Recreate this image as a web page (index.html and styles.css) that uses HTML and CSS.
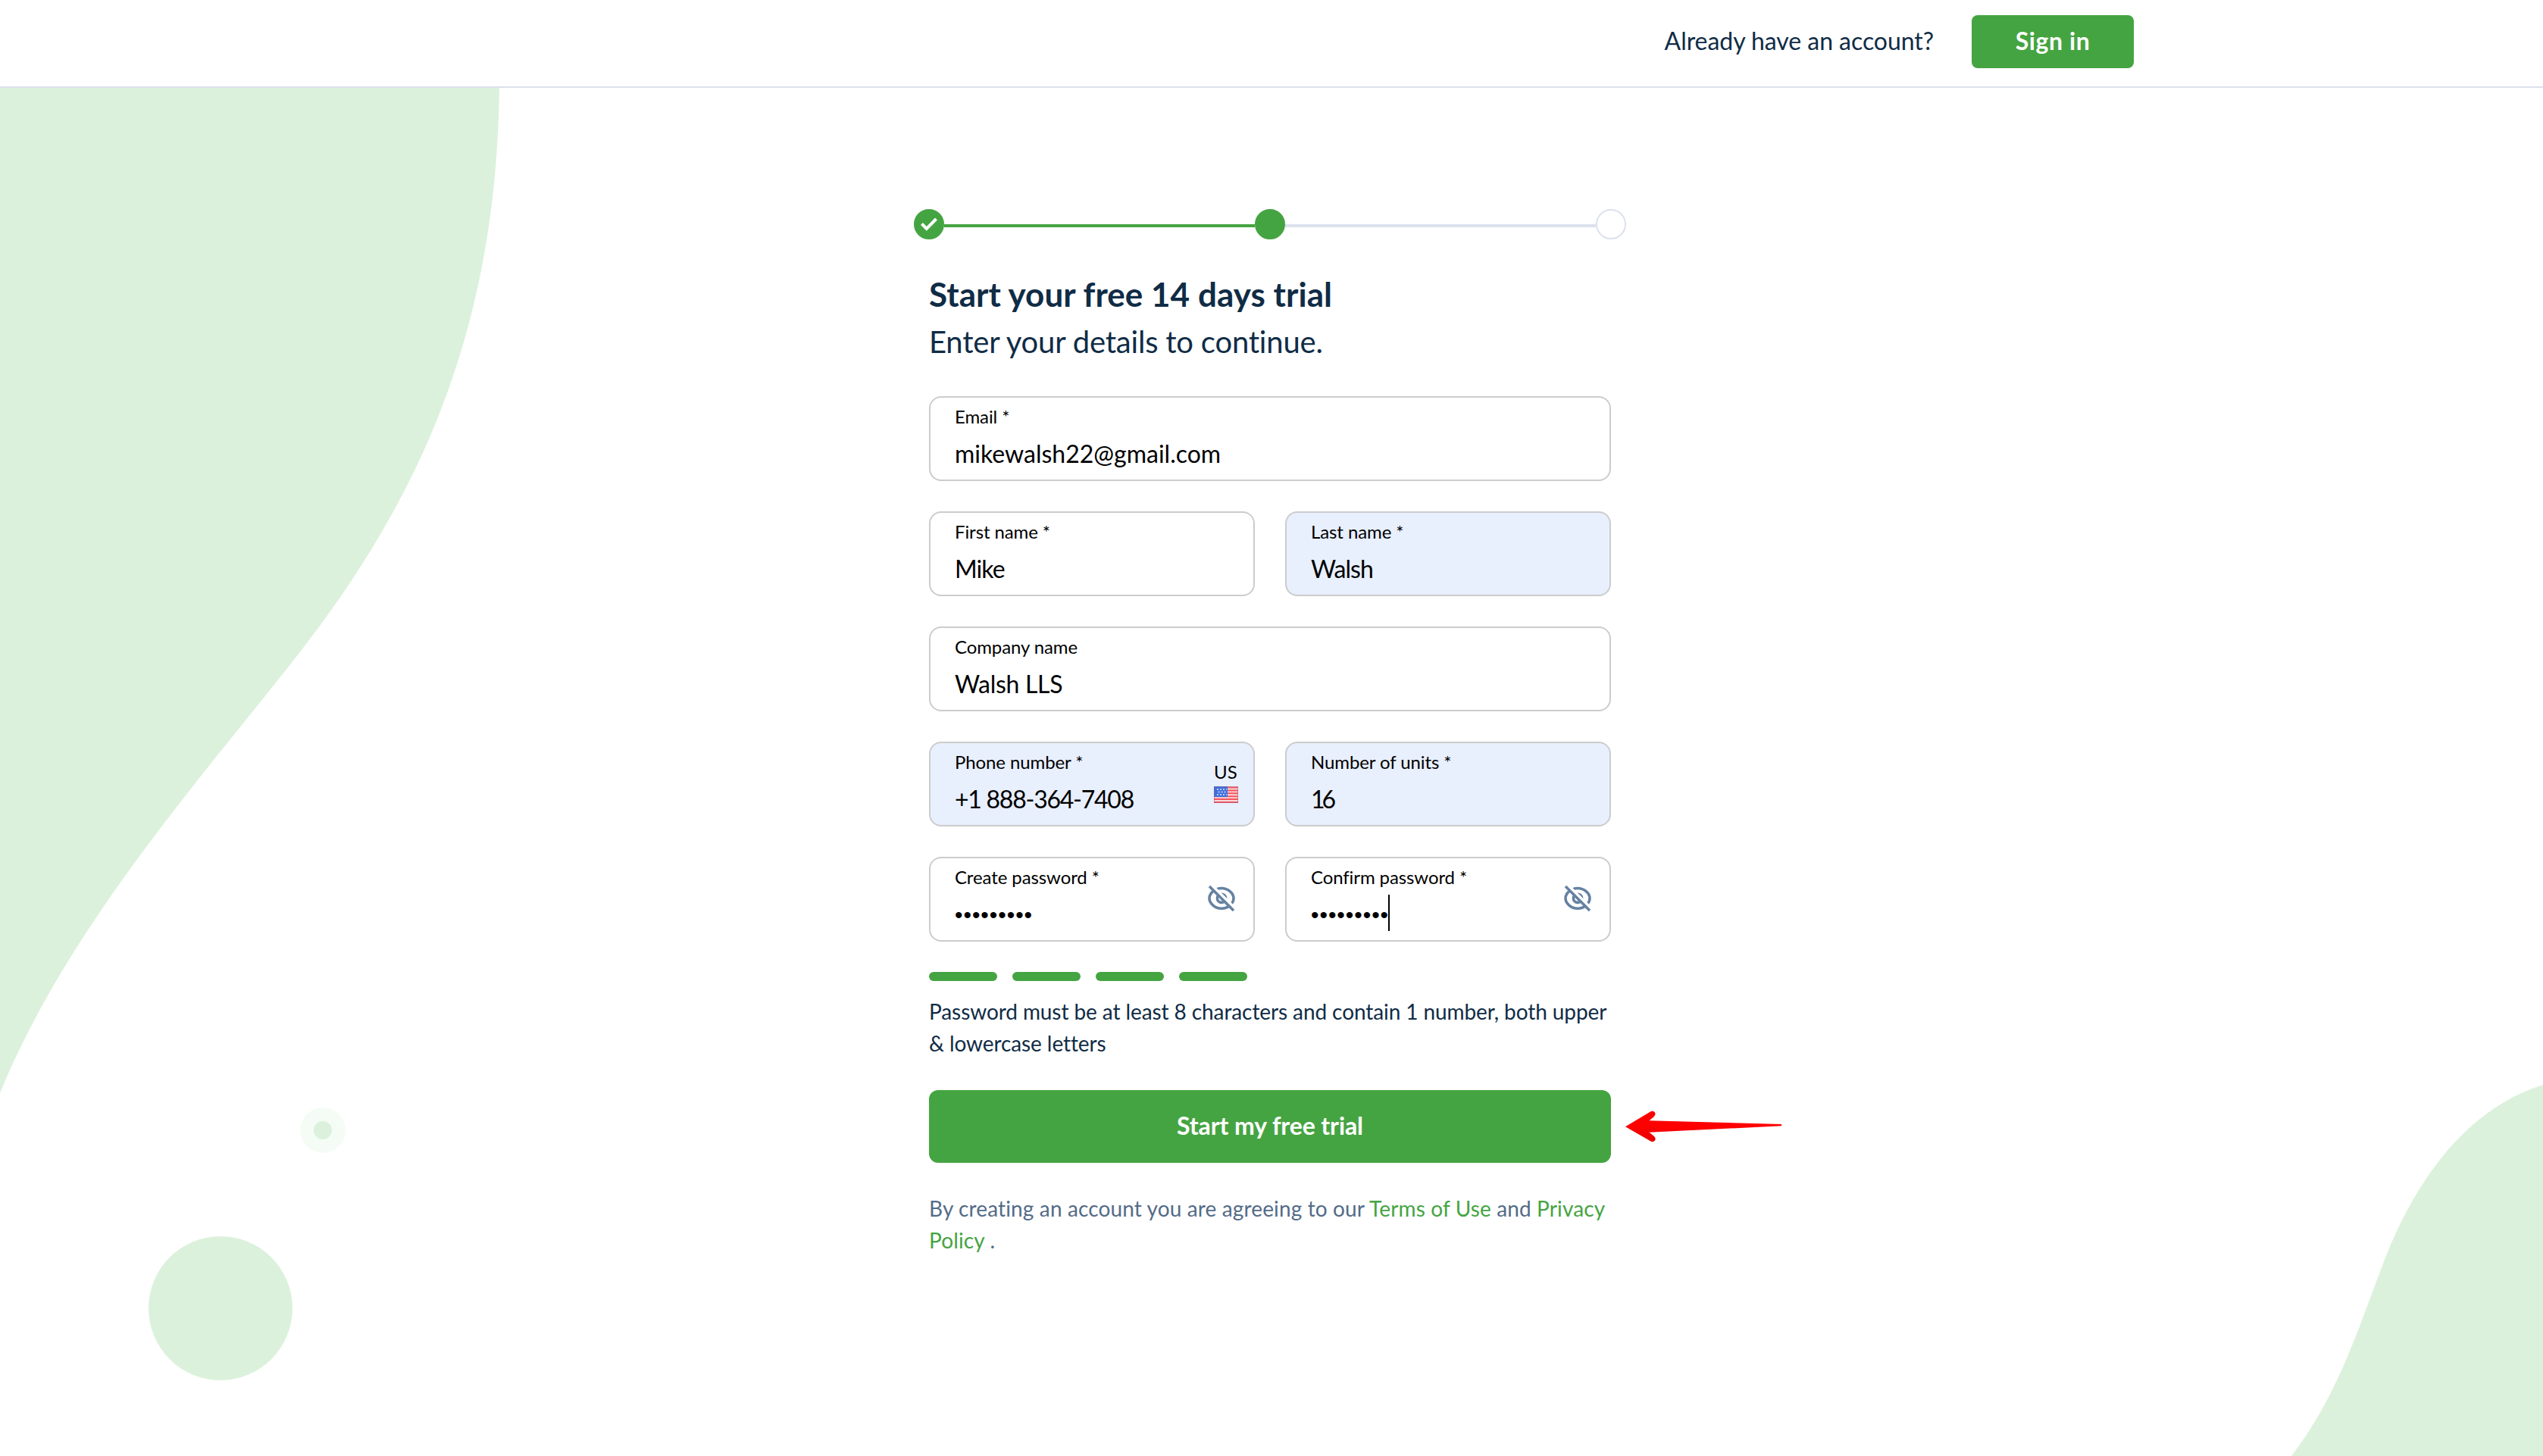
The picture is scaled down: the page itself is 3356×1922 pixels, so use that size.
FILE: index.html
```html
<!DOCTYPE html>
<html lang="en">
<head>
    <meta charset="UTF-8">
    <meta name="viewport" content="width=device-width, initial-scale=1.0">
    <title>Start your free trial</title>
    <link rel="stylesheet" href="styles.css">
</head>
<body>

    <!-- Background shapes -->
    <svg class="shapes" viewBox="0 0 3356 1922" aria-hidden="true">
        <path d="M0 116H659C655 420 565 640 404 850C290 1000 95 1210 0 1443Z"/>
        <path d="M3356 1432C3260 1462 3190 1550 3145 1668C3110 1760 3085 1842 3024 1922H3356Z"/>
        <circle cx="291" cy="1727" r="95"/>
        <circle class="halo" cx="426" cy="1492" r="30"/>
        <circle cx="426" cy="1492" r="12"/>
    </svg>

    <header class="header">
        <span class="header-text">Already have an account?</span>
        <a class="sign-in" href="#">Sign in</a>
    </header>

    <main class="signup">
        <div class="stepper">
            <span class="step done">
                <svg width="24" height="20" viewBox="0 0 24 20"><path d="M2.5 9.5L8.8 16L21.5 3" fill="none" stroke="#fff" stroke-width="4"/></svg>
            </span>
            <span class="step-line done"></span>
            <span class="step done"></span>
            <span class="step-line"></span>
            <span class="step"></span>
        </div>

        <h1>Start your free 14 days trial</h1>
        <p class="subtitle">Enter your details to continue.</p>

        <form class="form">
            <div class="field wide">
                <label>Email *</label>
                <div class="value">mikewalsh22@gmail.com</div>
            </div>
            <div class="field">
                <label>First name *</label>
                <div class="value name">Mike</div>
            </div>
            <div class="field filled">
                <label>Last name *</label>
                <div class="value name">Walsh</div>
            </div>
            <div class="field wide">
                <label>Company name</label>
                <div class="value company">Walsh LLS</div>
            </div>
            <div class="field filled">
                <label>Phone number *</label>
                <div class="value phone">+1 888-364-7408</div>
                <div class="country">
                    <span>US</span>
                    <svg width="32" height="22" viewBox="0 0 32 22">
                        <rect width="32" height="22" fill="#f6d9dc"/>
                        <path d="M0 1.5H32M0 5.4H32M0 9.3H32M0 13.2H32M0 17.1H32M0 21H32" stroke="#f4565c" stroke-width="2"/>
                        <rect width="18" height="14" fill="#3f6fdc"/>
                        <path d="M4 4H17M5.5 7.5H17M4 11H17" stroke="#b9cbf5" stroke-width="1.8" stroke-dasharray="2 2"/>
                        <rect x=".5" y=".5" width="31" height="21" fill="none" stroke="#9a5a78" stroke-opacity=".45"/>
                    </svg>
                </div>
            </div>
            <div class="field filled">
                <label>Number of units *</label>
                <div class="value units">16</div>
            </div>
            <div class="field">
                <label>Create password *</label>
                <div class="value dots">•••••••••</div>
                <svg class="eye" width="36" height="36" viewBox="0 0 36 36">
                    <path d="M18 4.5C26.500 4.500 34 11 34 17.800S26.500 31.200 18 31.200S2 24.600 2 17.800S9.500 4.500 18 4.500Z"/>
                    <circle cx="18" cy="17.800" r="5.600"/>
                    <path class="gap" d="M5 .5L36.500 32"/>
                    <path d="M2 2L34 34"/>
                </svg>
            </div>
            <div class="field">
                <label>Confirm password *</label>
                <div class="value dots">•••••••••<span class="caret"></span></div>
                <svg class="eye" width="36" height="36" viewBox="0 0 36 36">
                    <path d="M18 4.5C26.500 4.500 34 11 34 17.800S26.500 31.200 18 31.200S2 24.600 2 17.800S9.500 4.500 18 4.500Z"/>
                    <circle cx="18" cy="17.800" r="5.600"/>
                    <path class="gap" d="M5 .5L36.500 32"/>
                    <path d="M2 2L34 34"/>
                </svg>
            </div>
        </form>

        <div class="strength">
            <span></span><span></span><span></span><span></span>
        </div>
        <p class="hint">Password must be at least 8 characters and contain 1 number, both upper<br>&amp; lowercase letters</p>

        <div class="submit">
            <button class="submit-button" type="button">Start my free trial</button>
            <svg class="arrow" width="210" height="44" viewBox="0 0 210 44">
                <defs>
                    <linearGradient id="red" x1="0" y1="0" x2="0" y2="1">
                        <stop offset=".5" stop-color="#ff0000"/>
                        <stop offset="1" stop-color="#e60000"/>
                    </linearGradient>
                </defs>
                <path fill="url(#red)" d="M0 22.300L33.500 2.300C38 .2 42 5 37.500 9.200L31.500 14.300L206 19V21.200L31.500 29.800L38 35C42 39 38 44 33.500 41.500Z"/>
            </svg>
        </div>

        <p class="terms">By creating an account you are agreeing to our <a href="#">Terms of Use</a> and <a href="#">Privacy<br>Policy</a> .</p>
    </main>

</body>
</html>
```
FILE: styles.css
```css
* {
    box-sizing: border-box;
}
body {
    margin: 0;
    height: 1922px;
    overflow: hidden;
    background: #fff;
    color: #102c46;
    font-family: Lato, "Open Sans", sans-serif;
}
a {
    color: #45a442;
    text-decoration: none;
}
/* Background */
.shapes {
    position: absolute;
    top: 0;
    left: 0;
    width: 3356px;
    height: 1922px;
    z-index: -1;
    fill: #dbf1db;
}
.shapes .halo {
    fill: #f5fcf5;
}
/* Header */
.header {
    display: flex;
    justify-content: flex-end;
    align-items: flex-start;
    gap: 50px;
    height: 116px;
    padding: 20px 540px 0 0;
    border-bottom: 2px solid #dce1ee;
    background: #fff;
    font-size: 32px;
    line-height: 68px;
}
.header-text {
    letter-spacing: -0.05px;
}
.sign-in {
    width: 214px;
    height: 70px;
    border-radius: 8px;
    background: #45a442;
    color: #fff;
    font-weight: bold;
    text-align: center;
    letter-spacing: 0.6px;
}
/* Sign up column */
.signup {
    width: 900px;
    margin: 160px 0 0 1226px;
}
.stepper {
    display: flex;
    align-items: center;
    margin: 0 -20px;
}
.step {
    display: flex;
    align-items: center;
    justify-content: center;
    width: 40px;
    height: 40px;
    border: 2px solid #dce1ee;
    border-radius: 50%;
}
.step-line {
    flex: 1;
    height: 4px;
    margin-top: 4px;
    background: #dce1ee;
}
.step.done, .step-line.done {
    background: #45a442;
    border-color: #45a442;
}
h1 {
    margin: 46px 0 12px;
    font-size: 44px;
    line-height: 52px;
    letter-spacing: 0.05px;
}
.subtitle {
    margin: 0 0 47px;
    font-size: 40px;
    line-height: 50px;
    letter-spacing: -0.2px;
}
/* Form */
.form {
    display: grid;
    grid-template-columns: 1fr 1fr;
    gap: 40px;
}
.field {
    position: relative;
    height: 112px;
    padding: 11px 32px 0;
    border: 2px solid #ccc;
    border-radius: 16px;
    color: #000;
}
.field.wide {
    grid-column: span 2;
}
.field.filled {
    background: #e8effd;
}
.field label {
    display: block;
    margin-bottom: 13px;
    font-size: 24px;
    line-height: 28px;
    letter-spacing: -0.1px;
}
.value {
    font-size: 32px;
    line-height: 44px;
}
.value.name {
    letter-spacing: -0.9px;
}
.value.company {
    letter-spacing: -0.3px;
}
.value.phone {
    letter-spacing: -1.25px;
}
.value.units {
    letter-spacing: -4px;
}
.value.dots {
    display: flex;
    align-items: center;
    padding-top: 2px;
    font-family: "Liberation Sans", sans-serif;
    font-size: 30px;
    line-height: 42px;
    letter-spacing: 0.95px;
}
.caret {
    width: 2px;
    height: 48px;
    margin: -6px 0 0 -1px;
    background: #000;
}
.country {
    position: absolute;
    top: 24px;
    right: 20px;
    width: 32px;
    font-size: 24px;
    line-height: 28px;
}
.country svg {
    display: block;
    margin-top: 5px;
}
.eye {
    position: absolute;
    top: 35px;
    right: 24px;
    fill: none;
    stroke: #6582a1;
    stroke-width: 3.6;
}
.eye .gap {
    stroke: #fff;
    stroke-width: 4;
}
/* Password strength */
.strength {
    display: flex;
    gap: 20px;
    margin-top: 40px;
}
.strength span {
    width: 90px;
    height: 12px;
    border-radius: 6px;
    background: #45a442;
}
.hint {
    margin: 19px 0 41px;
    font-size: 28px;
    line-height: 42px;
    letter-spacing: -0.09px;
    white-space: nowrap;
}
.submit {
    position: relative;
}
.submit-button {
    display: block;
    width: 100%;
    height: 96px;
    padding: 0 0 3px;
    border: 0;
    border-radius: 12px;
    background: #45a442;
    color: #fff;
    font: bold 32px Lato, sans-serif;
    letter-spacing: -0.1px;
}
/* Arrow pointing at the submit button */
.arrow {
    position: absolute;
    top: 26px;
    left: 919px;
}
.terms {
    margin: 39px 0 0;
    color: #536b88;
    font-size: 28px;
    line-height: 42px;
    letter-spacing: 0.13px;
    white-space: nowrap;
}
```
